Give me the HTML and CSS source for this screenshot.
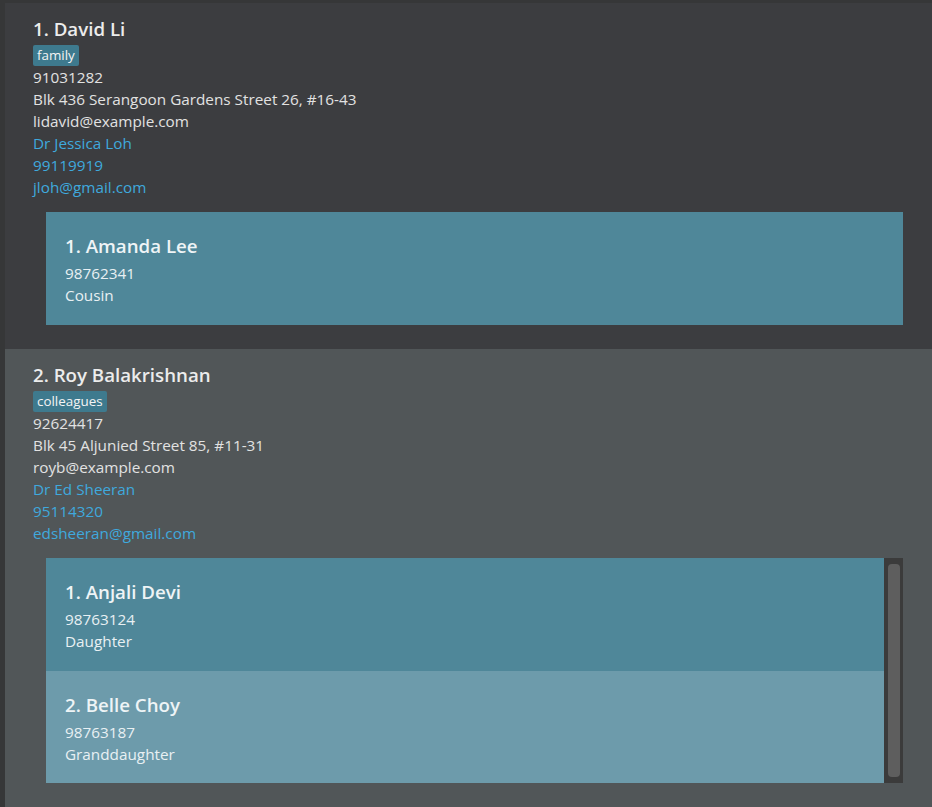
FILE: index.html
```html
<!DOCTYPE html>
<html lang="en">
<head>
<meta charset="utf-8">
<title>Persons</title>
<link rel="stylesheet" href="styles.css">
</head>
<body>
<div class="list">
  <div class="card card-dark">
    <div class="name">1. David Li</div>
    <div class="tags"><span class="tag">family</span></div>
    <div class="line">91031282</div>
    <div class="line">Blk 436 Serangoon Gardens Street 26, #16-43</div>
    <div class="line">lidavid@example.com</div>
    <div class="line link">Dr Jessica Loh</div>
    <div class="line link">99119919</div>
    <div class="line link">jloh@gmail.com</div>
    <div class="sublist">
      <div class="subitems">
        <div class="subcard">
          <div class="subname">1. Amanda Lee</div>
          <div class="subline">98762341</div>
          <div class="subline">Cousin</div>
        </div>
      </div>
    </div>
  </div>
  <div class="card card-light">
    <div class="name">2. Roy Balakrishnan</div>
    <div class="tags"><span class="tag">colleagues</span></div>
    <div class="line">92624417</div>
    <div class="line">Blk 45 Aljunied Street 85, #11-31</div>
    <div class="line">royb@example.com</div>
    <div class="line link">Dr Ed Sheeran</div>
    <div class="line link">95114320</div>
    <div class="line link">edsheeran@gmail.com</div>
    <div class="sublist">
      <div class="subitems">
        <div class="subcard">
          <div class="subname">1. Anjali Devi</div>
          <div class="subline">98763124</div>
          <div class="subline">Daughter</div>
        </div>
        <div class="subcard subcard-alt">
          <div class="subname">2. Belle Choy</div>
          <div class="subline">98763187</div>
          <div class="subline">Granddaughter</div>
        </div>
      </div>
      <div class="scrollbar"><div class="thumb"></div></div>
    </div>
  </div>
</div>
</body>
</html>
```
FILE: styles.css
```css
html, body {
  margin: 0;
  padding: 0;
  height: 100%;
}
body {
  background: #363738;
  font-family: "Open Sans", "Noto Sans", sans-serif;
  overflow: hidden;
}
.list {
  padding: 3px 0 0 5px;
  display: flex;
  flex-direction: column;
  min-height: 100%;
  box-sizing: border-box;
}
.card {
  padding: 13px 29px 24px 28px;
  display: flex;
  flex-direction: column;
}
.card-dark {
  background: #3c3d40;
}
.card-light {
  background: #515658;
  flex: 1;
}
.name {
  font-size: 18.7px;
  font-weight: 600;
  line-height: 26px;
  height: 26px;
  color: #ececec;
}
.tags {
  margin-top: 3px;
  display: flex;
  height: 21px;
}
.tag {
  background: #3e7a8e;
  color: #f4f4f4;
  font-size: 13.4px;
  line-height: 21px;
  padding: 0 4px;
  border-radius: 2px;
}
.line {
  font-size: 15.3px;
  line-height: 22px;
  color: #e2e2e2;
  white-space: nowrap;
}
.link {
  color: #3fa9dd;
}
.sublist {
  margin: 14px 0 0 13px;
  display: flex;
}
.subitems {
  flex: 1;
  display: flex;
  flex-direction: column;
}
.subcard {
  background: #4f8799;
  padding: 21px 19px 0 19px;
  height: 113px;
  box-sizing: border-box;
}
.subcard-alt {
  background: #6d9bab;
  height: 112px;
}
.subname {
  font-size: 18.7px;
  font-weight: 600;
  line-height: 26px;
  color: #eef4f6;
}
.subline {
  font-size: 15.3px;
  line-height: 22px;
  color: #e8f0f3;
}
.subname + .subline {
  margin-top: 3px;
}
.scrollbar {
  width: 19px;
  background: #3b3b3b;
  padding: 6px 3px 6px 4px;
  box-sizing: border-box;
  display: flex;
}
.thumb {
  flex: 1;
  background: #5e5e5e;
  border-radius: 4px;
}
```
